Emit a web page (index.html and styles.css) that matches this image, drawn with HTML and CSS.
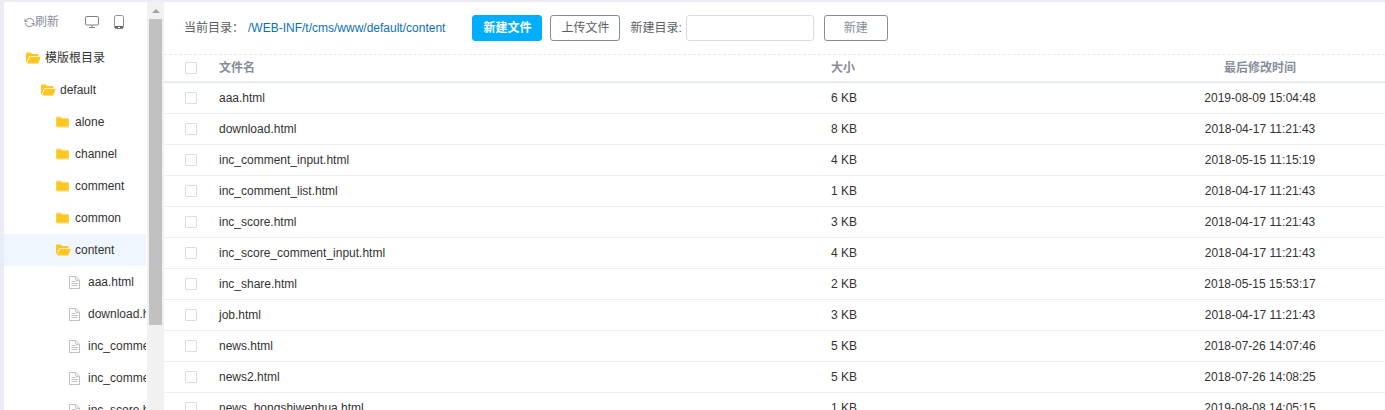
FILE: index.html
```
<!DOCTYPE html>
<html lang="zh-CN">
<head>
<meta charset="utf-8">
<title>模版管理</title>
<link rel="stylesheet" href="styles.css">
</head>
<body>
<svg class="sprite" aria-hidden="true">
  <symbol id="folder" viewBox="0 0 13 12"><path fill="#ffdc73" d="M0 1.500Q0 .6 1 .6h3.600l1.200 1.500h6.200q1 0 1 1v7.400q0 1-1 1H1q-1 0-1-1z"/><path fill="#ffc61f" d="M.5 2h4.600l1 .9h6.400v7.400H.5z"/></symbol>
  <symbol id="folder-open" viewBox="0 0 15 12"><path fill="#ffc61f" d="M0 1.500Q0 .6 1 .6h3.800L6 1.900h5.500q1 0 1 1v1H4.200q-.8 0-1.100.8L.6 10.500 0 9.500z"/><path fill="#ffc61f" d="M3.900 4.700H14.800L12.600 10.500q-.3.900-1.200.9H1.100z"/></symbol>
  <symbol id="file" viewBox="0 0 11 13"><path fill="none" stroke="#c0c0c0" d="M.5.5h6.300l3.700 3.600v8.400H.5zM6.700.7v3.600h3.600"/><path stroke="#c4c4c4" d="M2.500 5.500h4M2.500 7.500h6M2.500 9.500h6"/></symbol>
</svg>
<div class="app">
  <aside class="sidebar">
    <div class="panel">
      <div class="tools">
        <button class="refresh" type="button"><svg width="11" height="11" viewBox="0 0 11 11"><path fill="none" stroke="#878d99" d="M1 4.500h2.500M1 4.500V2M1 4.300Q3 1.300 5.800 1.300 9.500 1.500 9.800 5.200M10 6.500H7.500M10 6.500V9M10 6.700Q8 9.700 5.200 9.700 1.500 9.500 1.200 6"/></svg>刷新</button>
        <button class="device" type="button" aria-label="桌面"><svg width="14" height="13" viewBox="0 0 14 13"><rect x=".5" y=".5" width="13" height="8.500" rx=".8" fill="none" stroke="#808080"/><path fill="none" stroke="#808080" d="M7 9v2.500M4 11.500h6"/></svg></button>
        <button class="device" type="button" aria-label="手机"><svg width="10" height="14" viewBox="0 0 10 14"><rect x=".5" y=".5" width="9" height="13" rx="1.800" fill="none" stroke="#909090"/><path fill="#666" d="M1 11h8v1.500L8 13.500H2l-1-1z"/><path stroke="#fff" d="M4 12.500h2"/></svg></button>
      </div>
      <ul class="tree">
        <li class="node level-0"><svg class="open"><use href="#folder-open"/></svg>模版根目录</li>
        <li class="node level-1"><svg class="open"><use href="#folder-open"/></svg>default</li>
        <li class="node level-2"><svg class="closed"><use href="#folder"/></svg>alone</li>
        <li class="node level-2"><svg class="closed"><use href="#folder"/></svg>channel</li>
        <li class="node level-2"><svg class="closed"><use href="#folder"/></svg>comment</li>
        <li class="node level-2"><svg class="closed"><use href="#folder"/></svg>common</li>
        <li class="node level-2 current"><svg class="open"><use href="#folder-open"/></svg>content</li>
        <li class="node level-3"><svg class="file"><use href="#file"/></svg>aaa.html</li>
        <li class="node level-3"><svg class="file"><use href="#file"/></svg>download.html</li>
        <li class="node level-3"><svg class="file"><use href="#file"/></svg>inc_comment_input.html</li>
        <li class="node level-3"><svg class="file"><use href="#file"/></svg>inc_comment_list.html</li>
        <li class="node level-3"><svg class="file"><use href="#file"/></svg>inc_score.html</li>
      </ul>
    </div>
    <div class="scrollbar"><div class="arrow"></div><div class="thumb"></div></div>
  </aside>
  <main class="main">
    <form class="toolbar">
      <span class="path">当前目录：<a href="#">/WEB-INF/t/cms/www/default/content</a></span>
      <button class="btn primary" type="button">新建文件</button>
      <button class="btn" type="button">上传文件</button>
      <label class="dir-label" for="dir">新建目录:</label>
      <input class="dir" id="dir" type="text">
      <button class="btn create" type="button">新建</button>
    </form>
    <table class="files">
      <colgroup><col class="col-check"><col><col class="col-size"><col class="col-time"></colgroup>
      <thead><tr><th class="check"><input type="checkbox" aria-label="全选"></th><th>文件名</th><th>大小</th><th class="time">最后修改时间</th></tr></thead>
      <tbody>
        <tr><td class="check"><input type="checkbox" aria-label="aaa.html"></td><td>aaa.html</td><td>6 KB</td><td class="time">2019-08-09 15:04:48</td></tr>
        <tr><td class="check"><input type="checkbox" aria-label="download.html"></td><td>download.html</td><td>8 KB</td><td class="time">2018-04-17 11:21:43</td></tr>
        <tr><td class="check"><input type="checkbox" aria-label="inc_comment_input.html"></td><td>inc_comment_input.html</td><td>4 KB</td><td class="time">2018-05-15 11:15:19</td></tr>
        <tr><td class="check"><input type="checkbox" aria-label="inc_comment_list.html"></td><td>inc_comment_list.html</td><td>1 KB</td><td class="time">2018-04-17 11:21:43</td></tr>
        <tr><td class="check"><input type="checkbox" aria-label="inc_score.html"></td><td>inc_score.html</td><td>3 KB</td><td class="time">2018-04-17 11:21:43</td></tr>
        <tr><td class="check"><input type="checkbox" aria-label="inc_score_comment_input.html"></td><td>inc_score_comment_input.html</td><td>4 KB</td><td class="time">2018-04-17 11:21:43</td></tr>
        <tr><td class="check"><input type="checkbox" aria-label="inc_share.html"></td><td>inc_share.html</td><td>2 KB</td><td class="time">2018-05-15 15:53:17</td></tr>
        <tr><td class="check"><input type="checkbox" aria-label="job.html"></td><td>job.html</td><td>3 KB</td><td class="time">2018-04-17 11:21:43</td></tr>
        <tr><td class="check"><input type="checkbox" aria-label="news.html"></td><td>news.html</td><td>5 KB</td><td class="time">2018-07-26 14:07:46</td></tr>
        <tr><td class="check"><input type="checkbox" aria-label="news2.html"></td><td>news2.html</td><td>5 KB</td><td class="time">2018-07-26 14:08:25</td></tr>
        <tr><td class="check"><input type="checkbox" aria-label="news_hongshiwenhua.html"></td><td>news_hongshiwenhua.html</td><td>1 KB</td><td class="time">2019-08-08 14:05:15</td></tr>
      </tbody>
    </table>
  </main>
</div>
</body>
</html>
```

FILE: styles.css
```
* { box-sizing: border-box; }
body {
  margin: 0;
  background: #eaedf3;
  color: #333;
  font: 12px/18px "Liberation Sans", "Noto Sans CJK SC", sans-serif;
}
button, input { margin: 0; font: inherit; }
.sprite { position: absolute; width: 0; height: 0; }
.app {
  display: flex;
  height: 100vh;
  padding: 2px 0 0 4px;
  overflow: hidden;
}

.sidebar { display: flex; flex: none; width: 160px; background: #fff; }
.panel { flex: 1; min-width: 0; margin-right: 1px; overflow: hidden; }
.tools { display: flex; align-items: center; height: 40px; padding-left: 20px; }
.tools button { display: flex; align-items: center; padding: 0; border: 0; background: none; color: #878d99; }
.refresh { margin-right: 11px; }
.tools .device { margin-left: 15px; }
.tree { margin: 0; padding: 0; list-style: none; }
.node { display: flex; align-items: center; height: 32px; white-space: nowrap; }
.node svg { flex: none; }
.node .open { width: 15px; height: 12px; margin-right: 4px; }
.node .closed { width: 13px; height: 12px; margin-right: 6px; }
.node .file { width: 11px; height: 13px; margin-right: 8px; }
.level-0 { padding-left: 22px; }
.level-1 { padding-left: 37px; }
.level-2 { padding-left: 52px; }
.level-3 { padding-left: 65px; }
.current { background: #eff6ff; }

.scrollbar { flex: none; width: 17px; padding: 0 2px; background: #f1f1f1; }
.arrow { display: flex; align-items: center; justify-content: center; height: 17px; }
.arrow::before {
  content: "";
  border: 4px solid transparent;
  border-top-width: 0;
  border-bottom-color: #a3a3a3;
}
.thumb { height: 75%; background: #c1c1c1; }

.main { flex: 1; min-width: 0; background: #fff; overflow: hidden; }
.toolbar {
  display: flex;
  align-items: center;
  height: 53px;
  padding-left: 20px;
  border-bottom: 1px dashed #e6e9f3;
  white-space: nowrap;
}
.path { margin-right: 27px; color: #5a5e66; }
.path a { margin-left: 4px; color: #0b70be; text-decoration: none; }
.btn {
  height: 26px;
  padding: 0 10px;
  border: 1px solid #878d99;
  border-radius: 3px;
  background: #fff;
  color: #5a5e66;
  line-height: 24px;
}
.primary { margin-right: 8px; border-color: #00aeff; background: #00aeff; color: #fff; font-weight: bold; }
.dir-label { margin: 0 4px 0 10px; color: #5a5e66; }
.dir { width: 128px; height: 26px; border: 1px solid #d8dce5; border-radius: 3px; }
.create { width: 64px; margin-left: 10px; color: #878d99; }

.files { width: 100%; border-collapse: separate; border-spacing: 0; table-layout: fixed; }
.col-check { width: 45px; }
.col-size { width: 314px; }
.col-time { width: 250px; }
.files th, .files td { height: 31px; padding: 0 10px; border-bottom: 1px solid #ebeef5; text-align: left; }
.files th { height: 28px; border-bottom: 2px solid #e6ebf5; color: #878d99; }
.files .check { padding: 0 0 0 21px; }
.files .time { padding: 0; text-align: center; }
.check input {
  display: block;
  width: 12px;
  height: 12px;
  appearance: none;
  border: 1px solid #d8dce5;
  border-radius: 1px;
  background: #fff;
}
```
